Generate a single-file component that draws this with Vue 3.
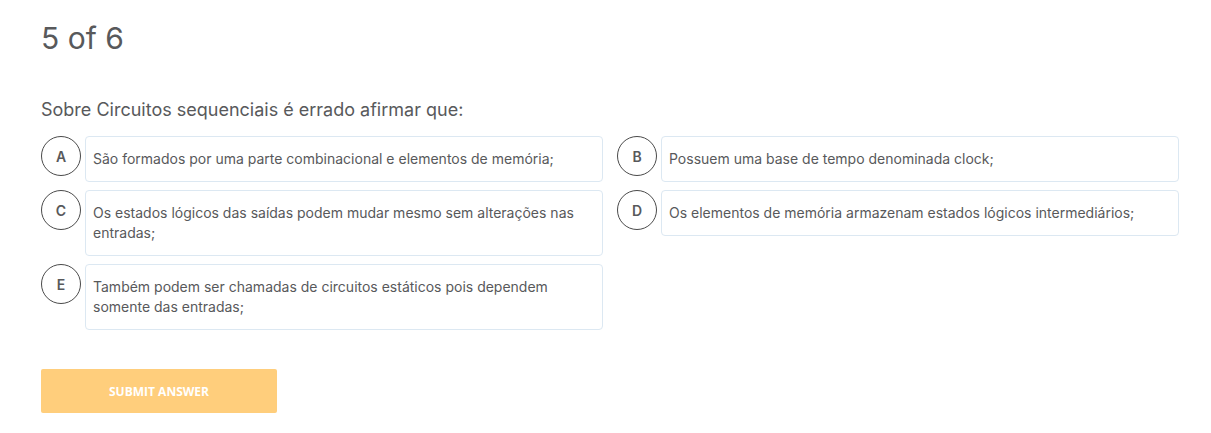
<script setup>
import { ref } from 'vue'

const options = [
  { key: 'A', text: 'São formados por uma parte combinacional e elementos de memória;' },
  { key: 'B', text: 'Possuem uma base de tempo denominada clock;' },
  { key: 'C', text: 'Os estados lógicos das saídas podem mudar mesmo sem alterações nas entradas;' },
  { key: 'D', text: 'Os elementos de memória armazenam estados lógicos intermediários;' },
  { key: 'E', text: 'Também podem ser chamadas de circuitos estáticos pois dependem somente das entradas;' },
]
const selected = ref('')
</script>

<template>
  <main class="quiz">
    <h1 class="progress">5 of 6</h1>
    <h2 class="question">Sobre Circuitos sequenciais é errado afirmar que:</h2>
    <div class="options">
      <button
        v-for="option in options"
        :key="option.key"
        type="button"
        class="option"
        :aria-pressed="selected === option.key"
        @click="selected = option.key"
      >
        <span class="letter">{{ option.key }}</span>
        <span class="answer">{{ option.text }}</span>
      </button>
    </div>
    <button type="submit" class="submit" :disabled="!selected">SUBMIT ANSWER</button>
  </main>
</template>

<style>
body {
  background: #fff;
}
</style>

<style scoped>
.quiz {
  padding: 20px 32px 20px 41px;
  color: #58595b;
  font-family: Inter, "Liberation Sans", sans-serif;
}
.progress {
  margin: 0;
  font-size: 30px;
  line-height: 36px;
  font-weight: 400;
}
.question {
  margin: 40px 0 12px;
  font-size: 18px;
  line-height: 28px;
  font-weight: 400;
}
.options {
  display: grid;
  grid-template-columns: 1fr 1fr;
  gap: 8px 14px;
  align-items: start;
}
.option {
  display: flex;
  align-items: flex-start;
  gap: 4px;
  padding: 0;
  border: 0;
  background: none;
  color: inherit;
  font: inherit;
  text-align: left;
  cursor: pointer;
}
.letter {
  display: flex;
  flex: none;
  align-items: center;
  justify-content: center;
  box-sizing: border-box;
  width: 40px;
  height: 40px;
  border: 1px solid #4a4a4a;
  border-radius: 50%;
  font-size: 14px;
  font-weight: 600;
}
.answer {
  flex: 1;
  padding: 12px 7px;
  border: 1px solid #dce8f2;
  border-radius: 4px;
  font-size: 14px;
  line-height: 20px;
}
.submit {
  display: block;
  width: 236px;
  height: 44px;
  margin-top: 39px;
  padding: 0;
  border: 0;
  border-radius: 2px;
  background: #ffce7c;
  color: #fff;
  font-family: "Open Sans", sans-serif;
  font-size: 12px;
  font-weight: 700;
  cursor: pointer;
}
</style>
